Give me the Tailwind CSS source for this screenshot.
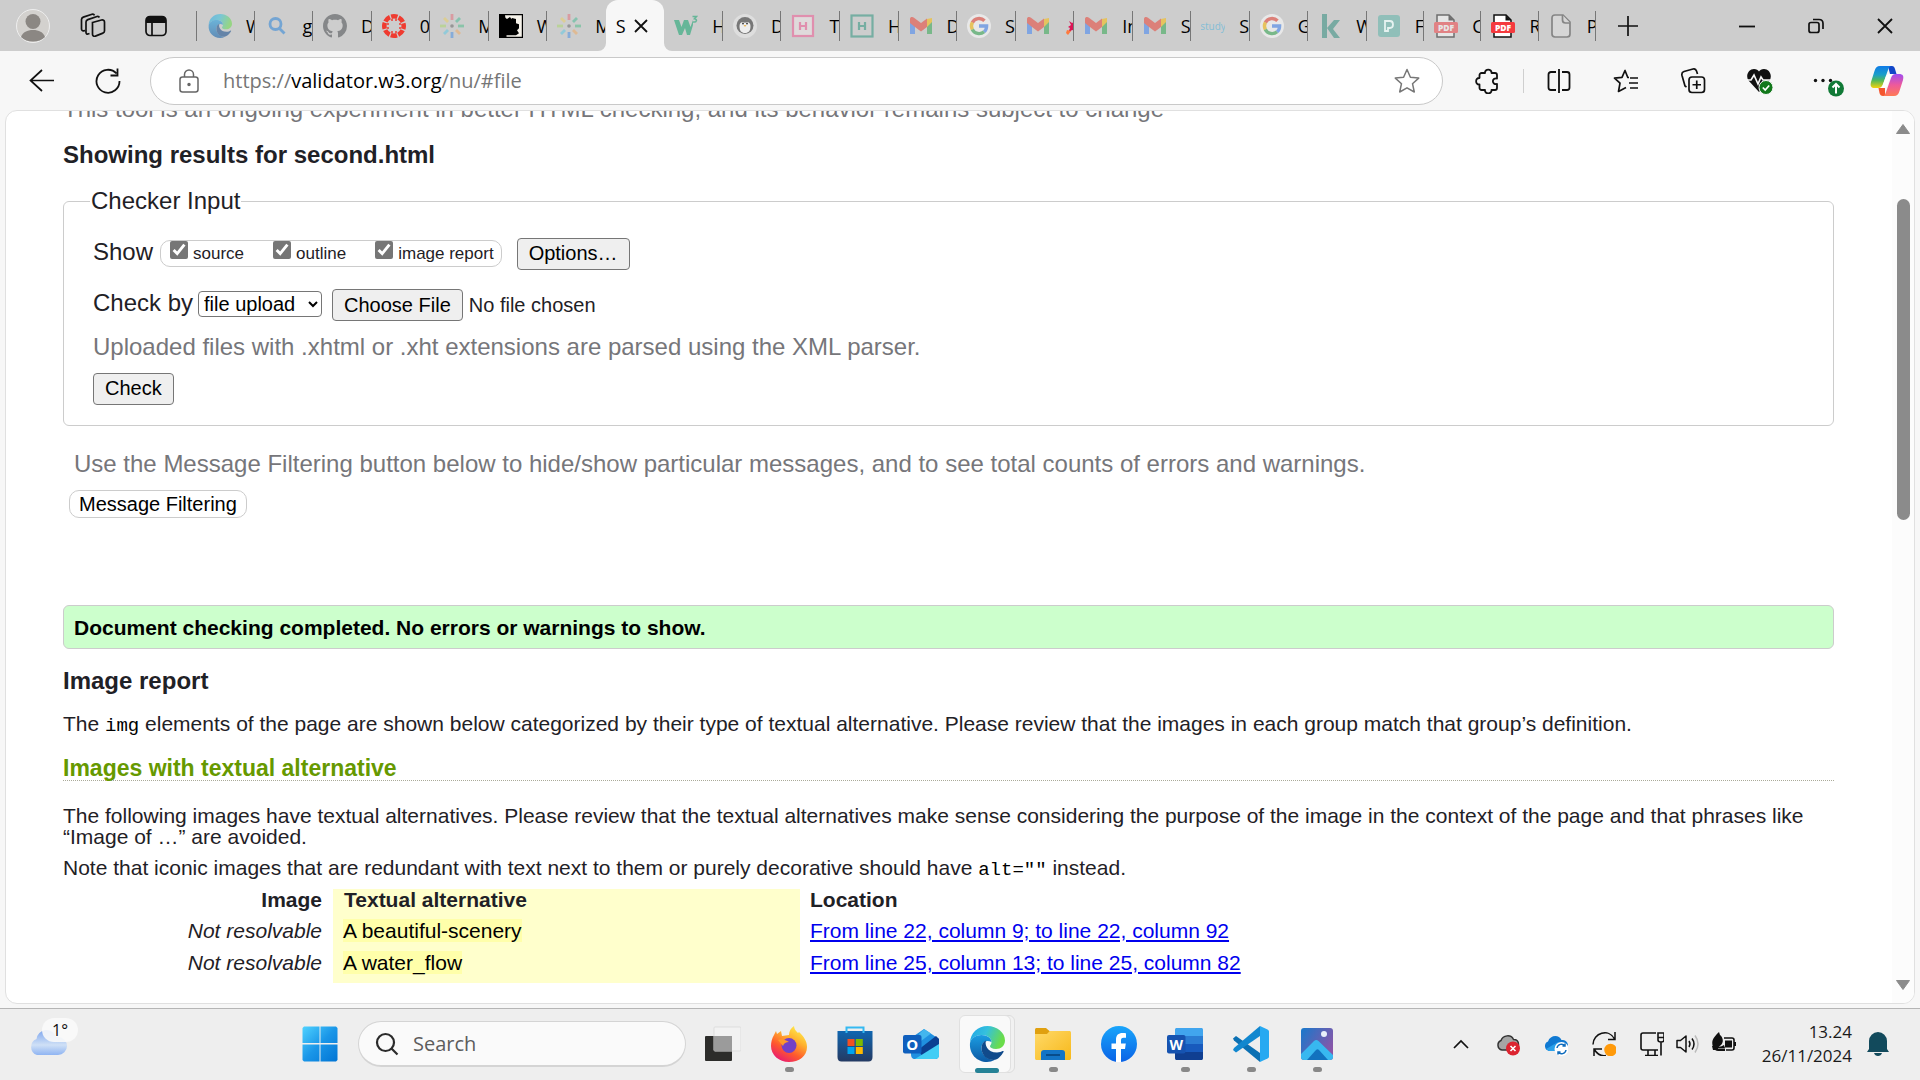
<!DOCTYPE html>
<html lang="en">
<head>
<meta charset="utf-8">
<title>Showing results for second.html</title>
<script src="https://cdn.jsdelivr.net/npm/@tailwindcss/browser@4"></script>
</head>
<body class="flex h-screen flex-col overflow-hidden bg-[#f7f7f7] font-['Open_Sans','Noto_Sans',sans-serif] text-black">

<svg width="0" height="0" class="absolute">
  <defs>
    <linearGradient id="edgeA" x1="0" y1="0" x2="1" y2="0.3"><stop offset="0" stop-color="#1fa4e8"/><stop offset=".5" stop-color="#35c1dd"/><stop offset="1" stop-color="#6adc4a"/></linearGradient>
    <linearGradient id="edgeB" x1="0" y1="0" x2="0" y2="1"><stop offset="0" stop-color="#1b9de2"/><stop offset="1" stop-color="#0c59a4"/></linearGradient>
    <symbol id="edge" viewBox="0 0 36 36">
      <path d="M1 17C1 7 9 0 18.500 0 28 0 36 6.500 36 14.500c0 5-4 8.500-9 8.500-4 0-6-1.600-6-2.800 0-.9 1.500-1.500 1.500-4.200 0-4-4.500-7-9.500-7C7 9 2 12.500 1 17z" fill="url(#edgeA)"/>
      <path d="M1 17c1-5 6-8 11.500-8 5.500 0 10 3 10 7-6-3-10 1-10 6 0 7 6 12 13 12-2.300 1.300-4.800 2-7.500 2C8 36 0 28 1 17z" fill="url(#edgeB)"/>
      <path d="M12.500 22c0-4 2-6.500 4.500-7.500-1.500 4 1 12 11 12 2.500 0 4.500-1 5.500-1.500.8-.4 1.500.3 1 1C32.500 29.500 29 34 24.500 34c-7 0-12-5-12-12z" fill="#114a8b"/>
    </symbol>
    <symbol id="gmail" viewBox="0 0 24 24">
      <path d="M1 6v14h5V9z" fill="#4285f4"/><path d="M18 9v11h5V6z" fill="#34a853"/>
      <path d="M18 5l5-1v4l-5 5z" fill="#fbbc04"/><path d="M1 5c0-2 2.500-2.500 4-1.200L12 9l6-4.500V13l-6 4.500L6 13l-5-4z" fill="#ea4335"/>
    </symbol>
    <symbol id="google" viewBox="0 0 24 24">
      <circle cx="12" cy="12" r="12" fill="#fff"/>
      <g fill="none" stroke-width="3.400"><path d="M17.500 6.800A7.600 7.600 0 0 0 5.300 8.600" stroke="#ea4335"/><path d="M5.400 8.400a7.600 7.600 0 0 0 0 7.200" stroke="#fbbc05"/><path d="M5.300 15.400a7.600 7.600 0 0 0 11.800 2.300" stroke="#34a853"/><path d="M12 12h7.600c0 2.500-.9 4.500-2.500 5.800" stroke="#4285f4"/></g>
    </symbol>
    <symbol id="spark" viewBox="0 0 24 24">
      <g stroke-width="2.800"><path d="M12 0v6" stroke="#e8606c"/><path d="M20 4l-4 4" stroke="#31b98c"/><path d="M24 12h-6" stroke="#3aba7f"/><path d="M20 20l-4-4" stroke="#f5a54e"/><path d="M12 24v-6" stroke="#3185e8"/><path d="M4 20l4-4" stroke="#4bc7e8"/><path d="M0 12h6" stroke="#a4d95c"/><path d="M4 4l4 4" stroke="#f0d050"/></g><circle cx="12" cy="12" r="1.800" fill="#555"/>
    </symbol>
    <symbol id="pdf" viewBox="0 0 24 24">
      <path d="M3 1h12l5 5v17H3z" fill="#fff" stroke="#111" stroke-width="1.500"/><path d="M14.500 1v5.500H20z" fill="#111"/>
      <rect x="0" y="8" width="24" height="11" rx="1.500" fill="#f53a3e"/>
      <text x="12" y="16.500" text-anchor="middle" font-family="Open Sans" font-size="8.500" font-weight="800" fill="#fff">PDF</text>
    </symbol>
    <linearGradient id="win" x1="0" y1="0" x2="1" y2="1"><stop offset="0" stop-color="#4fd2ff"/><stop offset=".5" stop-color="#1a96e8"/><stop offset="1" stop-color="#0074d4"/></linearGradient>
    <linearGradient id="fbg" x1="0" y1="0" x2="0" y2="1"><stop offset="0" stop-color="#19a5fb"/><stop offset="1" stop-color="#0a63e6"/></linearGradient>
    <linearGradient id="ff" x1=".8" y1="0" x2=".2" y2="1"><stop offset="0" stop-color="#fff44f"/><stop offset=".35" stop-color="#ffb02e"/><stop offset=".65" stop-color="#ff5a2c"/><stop offset="1" stop-color="#e6127a"/></linearGradient>
    <linearGradient id="store" x1="0" y1="0" x2="0" y2="1"><stop offset="0" stop-color="#1066b0"/><stop offset="1" stop-color="#243a63"/></linearGradient>
    <linearGradient id="folder" x1="0" y1="0" x2="1" y2="1"><stop offset="0" stop-color="#ffd968"/><stop offset="1" stop-color="#f7b81a"/></linearGradient>
    <linearGradient id="photo" x1="0" y1="0" x2="1" y2=".6"><stop offset="0" stop-color="#1779cc"/><stop offset="1" stop-color="#8a55a8"/></linearGradient>
    <linearGradient id="cloud" x1="0" y1="0" x2="0" y2="1"><stop offset="0" stop-color="#7ea6ee"/><stop offset=".6" stop-color="#cfe0f6"/><stop offset="1" stop-color="#8fb4f2"/></linearGradient>
    <linearGradient id="cpA" x1="0" y1="0" x2="0" y2="1"><stop offset="0" stop-color="#0f7be8"/><stop offset=".4" stop-color="#1b9fc8"/><stop offset=".65" stop-color="#4fb85b"/><stop offset="1" stop-color="#f5d20c"/></linearGradient>
    <linearGradient id="cpB" x1="0" y1="0" x2="0" y2="1"><stop offset="0" stop-color="#a04cf0"/><stop offset=".5" stop-color="#ee5a9b"/><stop offset="1" stop-color="#ff7a55"/></linearGradient>
  </defs>
</svg>

<!-- Tab strip -->
<header class="flex h-[51px] shrink-0 bg-[#cdcdcd] text-lg leading-6">
  <div class="flex w-[196px] shrink-0 items-center pl-4">
    <button aria-label="Profile" class="size-[34px]"><svg viewBox="0 0 34 34"><circle cx="17" cy="17" r="16.500" fill="#d3d1ce" stroke="#eee"/><circle cx="17" cy="12.500" r="7.500" fill="#8b8783"/><path d="M5 28c2-5 6-7 12-7s10 2 12 7c-6 6-18 6-24 0z" fill="#8b8783"/></svg></button>
    <button aria-label="Workspaces" class="ml-[30px] size-[26px]"><svg viewBox="0 0 26 26" fill="none" stroke="#111" stroke-width="1.700"><path d="M12.500 9.500l9-2.500c1.500-.4 3 .5 3 2v9c0 1-.6 1.800-1.600 2.100l-7.500 3c-1.500.5-2.900-.3-2.900-1.900z"/><path d="M9.500 20.500l-1.500.5c-1.200.3-2-.5-2-1.500V9c0-1.200.8-2 1.800-2.400L17 3.500c1-.3 2 .2 2.400 1M5 17.500l-1.500.3C2.500 18 1.500 17 1.500 16V6.500c0-1.200.8-2 1.800-2.400L12 1.300c1-.3 2 0 2.500 1"/></svg></button>
    <button aria-label="Vertical tabs" class="ml-[38px] size-6"><svg viewBox="0 0 24 24"><rect x="2" y="2.500" width="20" height="19" rx="4" fill="none" stroke="#111" stroke-width="1.700"/><path d="M2 9V6c0-2 1.500-4 4-4h12c2.500 0 4 2 4 4v3z" fill="#111"/><path d="M8 9v12" stroke="#111" stroke-width="1.700"/></svg></button>
  </div>
  <nav class="flex min-w-0 flex-1" aria-label="Tabs">
    <div class="grid min-w-0 flex-[1170] grid-cols-20 items-center">
      <a href="#" class="flex h-[30px] min-w-0 items-center gap-[14px] overflow-hidden border-x border-[#777] pl-[11px]"><svg class="size-6 shrink-0 opacity-55"><use href="#edge"/></svg>W3C</a>
      <a href="#" class="flex h-[30px] min-w-0 items-center gap-[14px] overflow-hidden border-r border-[#777] pl-[10px]"><svg class="size-6 shrink-0 opacity-60" viewBox="0 0 24 24" fill="none" stroke="#3a8bd8" stroke-width="2.800"><circle cx="10.500" cy="10" r="5.500"/><path d="M14.500 14.500l5 5"/></svg>git</a>
      <a href="#" class="flex h-[30px] min-w-0 items-center gap-[14px] overflow-hidden border-r border-[#777] pl-[10px]"><svg class="size-6 shrink-0" viewBox="0 0 16 16" fill="#858789"><path d="M8 0C3.580 0 0 3.580 0 8c0 3.540 2.290 6.530 5.470 7.590.4.070.550-.170.550-.380 0-.190-.010-.820-.010-1.490-2.010.370-2.530-.490-2.690-.940-.090-.230-.480-.940-.820-1.130-.280-.150-.680-.520-.010-.530.630-.010 1.080.580 1.230.820.720 1.210 1.870.870 2.330.660.070-.520.280-.870.510-1.070-1.780-.200-3.640-.890-3.640-3.950 0-.870.310-1.590.820-2.150-.080-.200-.360-1.020.080-2.120 0 0 .670-.210 2.200.820.640-.180 1.320-.270 2-.270s1.360.090 2 .270c1.530-1.040 2.200-.820 2.200-.820.440 1.100.160 1.920.080 2.120.510.560.820 1.270.820 2.150 0 3.070-1.870 3.750-3.650 3.950.290.250.540.730.540 1.480 0 1.070-.010 1.930-.010 2.200 0 .210.150.460.550.380A8.010 8.010 0 0 0 16 8c0-4.420-3.580-8-8-8z"/></svg>Dev</a>
      <a href="#" class="flex h-[30px] min-w-0 items-center gap-[14px] overflow-hidden border-r border-[#777] pl-[10px]"><svg class="size-6 shrink-0" viewBox="0 0 24 24"><circle cx="12" cy="12" r="9.700" fill="none" stroke="#ef3b30" stroke-width="4.600" stroke-dasharray="6.320 1.300" stroke-dashoffset="3.160"/><g fill="#ef3b30"><circle cx="10" cy="6" r="1"/><circle cx="14" cy="6" r="1"/><circle cx="10" cy="18" r="1"/><circle cx="14" cy="18" r="1"/><circle cx="6" cy="10" r="1"/><circle cx="6" cy="14" r="1"/><circle cx="18" cy="10" r="1"/><circle cx="18" cy="14" r="1"/></g></svg>01</a>
      <a href="#" class="flex h-[30px] min-w-0 items-center gap-[14px] overflow-hidden border-r border-[#777] pl-[10px]"><svg class="size-6 shrink-0 opacity-45"><use href="#spark"/></svg>My</a>
      <a href="#" class="flex h-[30px] min-w-0 items-center gap-[14px] overflow-hidden border-r border-[#777] pl-[10px]"><svg class="size-6 shrink-0" viewBox="0 0 24 24"><rect width="24" height="24"/><path d="M6 1.200h16.800v21.600H7.500v-1.500H17l3-2-2-3 2-2v-4l-3-1V5l-4-1-2 3-3-1-1 2z" fill="#f5f2ea"/><path d="M5 3l3 2 3-2 2 3-2 3 1 4-4 3-4-2z"/></svg>We</a>
      <a href="#" class="flex h-[30px] min-w-0 items-center gap-[14px] overflow-hidden border-r border-transparent pl-[10px]"><svg class="size-6 shrink-0 opacity-45"><use href="#spark"/></svg>My</a>
      <a href="#" aria-current="page" class="relative flex h-[51px] min-w-0 items-center justify-between rounded-t-[12px] bg-[#f7f7f7] pr-4 pl-[10px]">
        <span>S</span><svg class="size-[14px] shrink-0" viewBox="0 0 14 14" stroke="#111" stroke-width="1.800"><path d="M1 1l12 12M13 1L1 13"/></svg>
        <svg class="absolute bottom-0 -left-2 size-2" viewBox="0 0 8 8"><path d="M8 0v8H0a8 8 0 0 0 8-8z" fill="#f7f7f7"/></svg>
        <svg class="absolute -right-2 bottom-0 size-2" viewBox="0 0 8 8"><path d="M0 0v8h8a8 8 0 0 1-8-8z" fill="#f7f7f7"/></svg>
      </a>
      <a href="#" class="flex h-[30px] min-w-0 items-center gap-[14px] overflow-hidden border-r border-[#777] pl-[10px]"><svg class="size-6 shrink-0 opacity-60" viewBox="0 0 24 24" fill="#22a775"><path d="M0 6h5l2.500 7L10 6h4l2.500 7L19 6v5l-3 10h-3l-2-7-3 7H5z"/><path d="M18.500 2.500h4l-2 2.200c3 .3 2.500 4-1.500 3.300" fill="none" stroke="#22a775" stroke-width="1.500"/></svg>HT</a>
      <a href="#" class="flex h-[30px] min-w-0 items-center gap-[14px] overflow-hidden border-r border-[#777] pl-[10px]"><svg class="size-6 shrink-0" viewBox="0 0 24 24"><circle cx="12" cy="12" r="12" fill="#dedede"/><circle cx="12" cy="11.500" r="8.500" fill="#777"/><path d="M6.500 12c0-4 4-5 5.500-3 1.500-2 5.500-1 5.500 3 0 5-2 7-5.500 7s-5.500-2-5.500-7z" fill="#eee"/><circle cx="10" cy="9.500" r="1" fill="#444"/><circle cx="14" cy="9.500" r="1" fill="#444"/><path d="M10.500 11h3L12 13z" fill="#e9b75c"/></svg>Do</a>
      <a href="#" class="flex h-[30px] min-w-0 items-center gap-[14px] overflow-hidden border-r border-[#777] pl-[10px]"><svg class="size-6 shrink-0" viewBox="0 0 24 24" fill="none" stroke="#e08fae" stroke-width="2.200"><rect x="2" y="2" width="20" height="20" fill="#dfdadb"/><path d="M9 8v8M15 8v8M9 12h6"/></svg>Te</a>
      <a href="#" class="flex h-[30px] min-w-0 items-center gap-[14px] overflow-hidden border-r border-[#777] pl-[10px]"><svg class="size-6 shrink-0" viewBox="0 0 24 24" fill="none" stroke="#76aea2" stroke-width="2.200"><rect x="1.500" y="1.500" width="21" height="21"/><path d="M9 8v8M15 8v8M9 12h6"/></svg>HT</a>
      <a href="#" class="flex h-[30px] min-w-0 items-center gap-[14px] overflow-hidden border-r border-[#777] pl-[10px]"><svg class="size-6 shrink-0 opacity-55"><use href="#gmail"/></svg>De</a>
      <a href="#" class="flex h-[30px] min-w-0 items-center gap-[14px] overflow-hidden border-r border-[#777] pl-[10px]"><svg class="size-6 shrink-0 opacity-55"><use href="#google"/></svg>Se</a>
      <a href="#" class="flex h-[30px] min-w-0 items-center gap-[14px] overflow-hidden border-r border-[#777] pl-[10px]"><svg class="size-6 shrink-0 opacity-55"><use href="#gmail"/></svg><svg class="h-5 w-5 shrink-0" viewBox="0 0 20 20"><path d="M5 5l3 2 6-3v12l-6-2-4 3 2-5-2-1 3-2z" fill="#dc1556"/><path d="M3 14l4 1-3 4-2-2z" fill="#ff7a3d"/></svg></a>
      <a href="#" class="flex h-[30px] min-w-0 items-center gap-[14px] overflow-hidden border-r border-[#777] pl-[10px]"><svg class="size-6 shrink-0 opacity-55"><use href="#gmail"/></svg>Inb</a>
      <a href="#" class="flex h-[30px] min-w-0 items-center gap-[14px] overflow-hidden border-r border-[#777] pl-[10px]"><svg class="size-6 shrink-0 opacity-55"><use href="#gmail"/></svg>Sub</a>
      <a href="#" class="flex h-[30px] min-w-0 items-center gap-[14px] overflow-hidden border-r border-[#777] pl-[10px]"><svg class="size-6 shrink-0" viewBox="0 0 24 24"><text x="12" y="16" text-anchor="middle" font-family="Open Sans" font-size="10" fill="#84bdd6">study</text></svg>St</a>
      <a href="#" class="flex h-[30px] min-w-0 items-center gap-[14px] overflow-hidden border-r border-[#777] pl-[10px]"><svg class="size-6 shrink-0 opacity-55"><use href="#google"/></svg>Go</a>
      <a href="#" class="flex h-[30px] min-w-0 items-center gap-[14px] overflow-hidden border-r border-[#777] pl-[10px]"><svg class="size-6 shrink-0" viewBox="0 0 24 24" fill="#78aaa2"><path d="M4 0h5v24H4zM9 14l7-8h6l-7 9 7 9h-6z"/></svg>Wh</a>
    </div>
    <div class="grid min-w-0 flex-[229] grid-cols-4 items-center">
      <a href="#" class="flex h-[30px] min-w-0 items-center gap-[14px] overflow-hidden border-r border-[#777] pl-[10px]"><svg class="size-6 shrink-0" viewBox="0 0 24 24"><rect x="1" y="1" width="22" height="22" rx="3" fill="#90bfb9"/><path d="M8 7h5c4 0 4 7 0 7h-2v3H8z" fill="none" stroke="#e5f2f0" stroke-width="1.800"/></svg>Fr</a>
      <a href="#" class="flex h-[30px] min-w-0 items-center gap-[14px] overflow-hidden border-r border-[#777] pl-[10px]"><svg class="size-6 shrink-0 opacity-50"><use href="#pdf"/></svg>Ch</a>
      <a href="#" class="flex h-[30px] min-w-0 items-center gap-[14px] overflow-hidden border-r border-[#777] pl-[10px]"><svg class="size-6 shrink-0"><use href="#pdf"/></svg>Re</a>
      <a href="#" class="flex h-[30px] min-w-0 items-center gap-[14px] overflow-hidden border-r border-[#777] pl-[10px]"><svg class="size-6 shrink-0" viewBox="0 0 24 24" fill="#d6d6d6" stroke="#858585" stroke-width="1.700"><path d="M6 1h8l7 7v12c0 2-1 3-3 3H6c-2 0-3-1-3-3V4c0-2 1-3 3-3z"/><path d="M13.500 1v5c0 2 1 3 3 3H21"/></svg>Pr</a>
    </div>
  </nav>
  <div class="flex w-[324px] shrink-0 items-center justify-between pr-[27px] pl-[21px]">
    <button aria-label="New tab" class="size-[22px]"><svg viewBox="0 0 22 22" stroke="#111" stroke-width="1.700"><path d="M11 1v20M1 11h20"/></svg></button>
    <div class="flex gap-[53px]">
      <button aria-label="Minimize" class="size-4"><svg viewBox="0 0 16 16" stroke="#111" stroke-width="1.800"><path d="M0 8.500h16"/></svg></button>
      <button aria-label="Restore" class="size-4"><svg viewBox="0 0 16 16" fill="none" stroke="#111" stroke-width="1.700"><rect x="1" y="4.500" width="10" height="10" rx="2"/><path d="M5 1.500h6c2.500 0 4 1.500 4 4V11"/></svg></button>
      <button aria-label="Close" class="size-4"><svg viewBox="0 0 16 16" stroke="#111" stroke-width="1.800"><path d="M1 1l14 14M15 1L1 15"/></svg></button>
    </div>
  </div>
</header>

<!-- Address bar -->
<div class="flex h-[59px] shrink-0 items-center pt-px">
  <div class="flex w-[150px] shrink-0 items-center gap-10 pl-[29px]">
    <button aria-label="Back" class="size-[26px]"><svg viewBox="0 0 26 26" fill="none" stroke="#111" stroke-width="1.700"><path d="M25 12.500H1.500M13 2L1.500 12.500 13 23"/></svg></button>
    <button aria-label="Refresh" class="size-[26px]"><svg viewBox="0 0 26 26" fill="none" stroke="#111" stroke-width="1.800"><path d="M24.500 13A11.500 11.500 0 1 1 21.500 5.500M22.500 0.500v7h-7"/></svg></button>
  </div>
  <div class="flex h-12 min-w-0 flex-1 items-center rounded-full border border-[#c9c9c9] bg-white pr-[22px] pl-[26px]">
    <svg class="size-6 shrink-0" viewBox="0 0 24 24" fill="none" stroke="#666" stroke-width="1.500"><rect x="3" y="8" width="18" height="15" rx="2.500"/><path d="M7.500 8V5.500a4.500 4.500 0 0 1 9 0V8"/><circle cx="12" cy="15.500" r="1" fill="#666"/></svg>
    <a href="https://validator.w3.org/nu/#file" class="ml-[22px] flex-1 text-xl leading-7 text-[#767676]">https://<span class="text-black">validator.w3.org</span>/nu/#file</a>
    <button aria-label="Add to favorites" class="size-[26px]"><svg viewBox="0 0 26 26" fill="none" stroke="#777" stroke-width="1.500" stroke-linejoin="round"><path d="M13 1.500l3.400 7.700 8.300.9-6.200 5.600 1.800 8.300L13 19.800 5.700 24l1.800-8.300L1.300 10.100l8.300-.9z"/></svg></button>
  </div>
  <div class="flex w-[477px] shrink-0 items-center pl-[32px]">
    <button aria-label="Extensions" class="size-[26px]"><svg viewBox="0 0 26 26" fill="none" stroke="#111" stroke-width="1.800" stroke-linejoin="round"><path d="M6.500 5H10c-.5-4.500 7-4.500 6.500 0H20c1 0 2 1 2 2v3.500c-5.500-1-5.500 6.500 0 5.500V20c0 1-1 2-2 2h-3.500c.5 4.500-7 4.500-6.500 0H6.500c-1 0-2-1-2-2v-3.500c-4.500.5-4.500-7 0-6.500V7c0-1 1-2 2-2z"/></svg></button>
    <span class="ml-[22px] h-6 w-px bg-[#cfcfcf]"></span>
    <button aria-label="Split screen" class="ml-[22px] size-[26px]"><svg viewBox="0 0 26 26" fill="none" stroke="#111" stroke-width="1.800"><path d="M10 4H5C3.500 4 2.500 5 2.500 6.500v13C2.500 21 3.500 22 5 22h5M16 4h5c1.500 0 2.500 1 2.500 2.500v13c0 1.500-1 2.500-2.500 2.500h-5M13 1v24"/></svg></button>
    <button aria-label="Favorites" class="ml-[41px] size-[26px]"><svg viewBox="0 0 26 26" fill="none" stroke="#111" stroke-width="1.700" stroke-linejoin="round"><path d="M16 9.500h-1.200L12 2.500 9 9.300l-7.500.9 5.500 5-1.500 8.300 7.500-4M17 10h8M16 15h9M17 20h8"/></svg></button>
    <button aria-label="Collections" class="ml-[41px] size-[26px]"><svg viewBox="0 0 26 26" fill="none" stroke="#111" stroke-width="1.700"><rect x="9" y="9" width="15.500" height="15.500" rx="3"/><path d="M16.750 12.500v8.500M12.500 16.750H21M6.500 19L5 18 2 7.500C1.500 5.500 2.500 4 4 3.500l9-2.500c1.500-.4 3 .5 3.500 2l1 3"/></svg></button>
    <button aria-label="Browser essentials" class="ml-[40px] size-7"><svg viewBox="0 0 28 28"><path d="M13 25L2.500 13.500C-1 8 3 2 8 2c2.500 0 4 1 5 2.500C14 3 15.500 2 18 2c5 0 9 6 5.500 11.500z" fill="#111"/><path d="M0 13h5l3-5 4 9 3-7 2 3h7" fill="none" stroke="#f7f7f7" stroke-width="1.700"/><circle cx="20" cy="20.500" r="7" fill="#12781b" stroke="#f7f7f7"/><path d="M16.800 20.500l2.400 2.500 4-4.500" fill="none" stroke="#fff" stroke-width="1.700"/></svg></button>
    <button aria-label="Settings and more" class="ml-[38px] size-8"><svg viewBox="0 0 32 32"><g fill="#111"><circle cx="3.500" cy="15.500" r="1.700"/><circle cx="11" cy="15.500" r="1.700"/><circle cx="18.500" cy="15.500" r="1.700"/></g><circle cx="24" cy="23.500" r="8" fill="#117a37"/><path d="M24 28.500v-9M20.500 22.500l3.500-3.500 3.500 3.500" fill="none" stroke="#fff" stroke-width="2"/></svg></button>
    <button aria-label="Copilot" class="ml-[26px] size-[34px]"><svg viewBox="0 0 34 34"><path d="M18 2h4c1.500 0 2.500 1 3 3l1.500 5H20z" fill="#1146c8"/><path d="M15 32h-2c-2 0-3-1-3.500-3L8.500 24H15z" fill="#f4562f"/><path d="M10 2h11c-1.500.5-2.300 2-3 4l-5 14c-1 2.800-2.300 4-4.500 4H5c-4 0-5-2-4-6L4.500 7C5.500 3.500 7 2 10 2z" fill="url(#cpA)"/><path d="M24 32H13c1.500-.5 2.300-2 3-4l5-14c1-2.800 2.300-4 4.500-4H29c4 0 5 2 4 6l-3.500 11c-1 3.500-2.500 5-5.500 5z" fill="url(#cpB)"/><path d="M12.500 22l3-8.500c.8-2.300 2-3.500 4.500-3.500h3c-2 1-3 3-3.500 5l-1.500 5c-.8 2.600-2 4-4.500 4h-3c1-.3 1.600-1 2-2z" fill="#fff"/></svg></button>
  </div>
</div>

<!-- Web page -->
<div class="mx-[5px] mb-[4px] flex min-h-0 flex-1 overflow-hidden rounded-xl border border-[#e0e0e0] bg-white font-['Liberation_Sans',Arial,sans-serif] text-[#1f2126]">
  <main class="min-w-0 flex-1 overflow-hidden pr-[58px] pl-[57px] text-[21px] leading-[21px]">
    <p class="-mt-4 text-2xl leading-7 text-[#76767a]">This tool is an ongoing experiment in better HTML checking, and its behavior remains subject to change</p>
    <h2 class="mt-[18px] text-2xl leading-7 font-bold">Showing results for second.html</h2>

    <form class="mt-[18px]">
      <fieldset class="rounded-md border border-[#ccc] pr-[29px] pb-5 pl-[29px]">
        <legend class="-ml-[3px] px-px text-2xl leading-7">Checker Input</legend>
        <div class="mt-[23px] flex h-8 items-start text-2xl leading-7">
          <span>Show</span>
          <div class="mt-[2px] ml-[7px] flex h-[27px] items-start rounded-[10px] border border-[#ccc] pr-[7px] pl-[9px] text-[17px] leading-5">
            <input id="source" type="checkbox" checked class="size-[18px] accent-[#767676]"><label for="source" class="mt-[3px] ml-[5px]">source</label>
            <input id="outline" type="checkbox" checked class="ml-[29px] size-[18px] accent-[#767676]"><label for="outline" class="mt-[3px] ml-[5px]">outline</label>
            <input id="report" type="checkbox" checked class="ml-[29px] size-[18px] accent-[#767676]"><label for="report" class="mt-[3px] ml-[5px]">image report</label>
          </div>
          <button type="button" class="ml-[15px] h-8 rounded-[4px] border border-[#767676] bg-[#efefef] px-[11px] pb-[2px] text-xl leading-6 text-black">Options…</button>
        </div>
        <div class="mt-[19px] flex h-8 items-start text-xl leading-6">
          <label for="docselect" class="text-2xl leading-7">Check by</label>
          <select id="docselect" class="mt-[2px] ml-[5px] h-[26px] w-[124px] rounded-[4px] border border-[#767676] bg-white px-px text-xl leading-6 text-black"><option>file upload</option></select>
          <input type="file" aria-label="File to check" class="ml-[10px] h-8 w-[300px] file:mr-[6px] file:h-8 file:rounded-[4px] file:border file:border-solid file:border-[#767676] file:bg-[#efefef] file:px-[11px] file:text-black">
        </div>
        <p class="mt-3 text-2xl leading-7 text-[#76767a]">Uploaded files with .xhtml or .xht extensions are parsed using the XML parser.</p>
        <button type="button" class="mt-3 block h-8 rounded-[4px] border border-[#767676] bg-[#efefef] px-[11px] pb-[2px] text-xl leading-6 text-black">Check</button>
      </fieldset>
    </form>

    <p class="mt-6 pl-[11px] text-2xl leading-7 text-[#76767a]">Use the Message Filtering button below to hide/show particular messages, and to see total counts of errors and warnings.</p>
    <button class="mt-3 ml-[6px] block h-7 rounded-[10px] border border-[#ccc] px-[9px] text-xl leading-6 text-black">Message Filtering</button>

    <p class="mt-[87px] flex h-11 items-center rounded-md border border-[#ccc] bg-[#cfc] pl-[10px] font-bold text-black">Document checking completed. No errors or warnings to show.</p>

    <h2 class="mt-[18px] text-2xl leading-7 font-bold">Image report</h2>
    <p class="mt-[18px]">The <code class="font-['Liberation_Mono',monospace] text-[19px] leading-4 text-black">img</code> elements of the page are shown below categorized by their type of textual alternative. Please review that the images in each group match that group’s definition.</p>
    <h3 class="mt-5 h-[27px] border-b border-dotted border-[#aa9] text-[23px] leading-7 font-bold text-[#690]">Images with textual alternative</h3>
    <p class="mt-6">The following images have textual alternatives. Please review that the textual alternatives make sense considering the purpose of the image in the context of the page and that phrases like “Image of …” are avoided.</p>
    <p class="mt-[10px]">Note that iconic images that are redundant with text next to them or purely decorative should have <code class="font-['Liberation_Mono',monospace] text-[19px] leading-4 text-black">alt=""</code> instead.</p>

    <table class="mt-[11px] text-left">
      <thead>
        <tr class="h-[30px] align-top">
          <th class="w-[270px] pr-[11px] text-right">Image</th><th class="w-[467px] bg-[#ffc] pl-[11px]">Textual alternative</th><th class="pl-[10px]">Location</th>
        </tr>
      </thead>
      <tbody class="leading-[23px]">
        <tr class="h-8 align-top"><td class="pr-[11px] text-right italic">Not resolvable</td><td class="bg-[#ffc] pl-[10px] text-black"><span class="bg-[#ffa]">A beautiful-scenery</span></td><td class="pl-[10px]"><a href="#l22c92" class="text-[#00e] underline">From line 22, column 9; to line 22, column 92</a></td></tr>
        <tr class="h-8 align-top"><td class="pr-[11px] text-right italic">Not resolvable</td><td class="bg-[#ffc] pl-[10px] text-black"><span class="bg-[#ffa]">A water_flow</span></td><td class="pl-[10px]"><a href="#l25c82" class="text-[#00e] underline">From line 25, column 13; to line 25, column 82</a></td></tr>
      </tbody>
    </table>
  </main>
  <div class="flex w-[22px] shrink-0 flex-col items-center bg-[#fcfcfc] py-3">
    <svg class="h-3 w-4" viewBox="0 0 16 12"><path d="M8 1.500l6.500 9h-13z" fill="#8b8b8b" stroke="#8b8b8b" stroke-linejoin="round"/></svg>
    <div class="mt-[64px] h-[321px] w-[13px] rounded-full bg-[#8b8b8b]"></div>
    <svg class="mt-auto h-3 w-4" viewBox="0 0 16 12"><path d="M8 10.500l6.500-9h-13z" fill="#8b8b8b" stroke="#8b8b8b" stroke-linejoin="round"/></svg>
  </div>
</div>

<!-- Taskbar -->
<footer class="flex h-[72px] shrink-0 items-center border-t border-[#b5b5b5] bg-[#eee] pb-px">
  <button aria-label="Weather" class="mt-[2px] ml-[28px] h-[50px] w-[52px] shrink-0 self-start"><svg viewBox="0 0 52 50"><path d="M9 44a8.500 8.500 0 0 1-.5-16A10 10 0 0 1 28 26h2a9 9 0 0 1 0 18z" fill="url(#cloud)"/><rect x="14" y="7" width="36" height="24" rx="12" fill="#f9f9f9" fill-opacity=".9"/><text x="24" y="25" font-family="Open Sans" font-size="16" fill="#111">1°</text></svg></button>
  <button aria-label="Start" class="ml-[222px] size-9 shrink-0"><svg viewBox="0 0 36 36" fill="url(#win)"><path d="M2 .5h15.500V17H.5V2zM18.500.5H34L35.500 2v15h-17zM.5 18.500h17v17H2L.5 34zM18.500 18.500h17V34L34 35.500H18.500z"/></svg></button>
  <label class="ml-5 flex h-[46px] w-[328px] shrink-0 items-center rounded-full border border-b-2 border-[#d4d4d4] bg-[#fafafa] pl-4">
    <svg class="size-6" viewBox="0 0 24 24" fill="none" stroke="#2b2b2b" stroke-width="2.200"><circle cx="10.500" cy="10.500" r="8.500"/><path d="M16.500 16.500l6 6"/></svg>
    <input type="text" aria-label="Search" placeholder="Search" class="ml-[14px] w-[220px] text-xl leading-7 placeholder:text-[#5d5d5d]">
  </label>
  <div class="ml-[4px] flex h-full shrink-0 items-center">
    <button aria-label="Task view" class="flex w-[66px] justify-center"><svg class="size-9" viewBox="0 0 36 36"><rect y="10" width="27" height="25" rx="1" fill="#2c2c2a"/><rect x="9" y="1" width="27" height="24" rx="1" fill="#f2f2f2" stroke="#ddd"/><path d="M9 10h18v15H9z" fill="#9b9b9b"/></svg></button>
    <button aria-label="Firefox" class="relative flex w-[66px] justify-center"><svg class="size-9" viewBox="0 0 36 36"><path d="M3 9l2-4 1 3 4-3 1 5 7-1c0-4 2-7 5-9 0 3 2 5 4 7l1-1c5 5 8 9 8 15 0 9-8 15-18 15S0 29 0 20c0-4 1-8 3-11z" fill="url(#ff)"/><circle cx="18" cy="19.500" r="7.500" fill="#7340c8"/><path d="M7 14c4-2 8 0 11 2-3 0-5 1-6 4z" fill="#ff9a2a"/></svg><span class="absolute -bottom-[10px] h-[5px] w-[9px] rounded-full bg-[#888]"></span></button>
    <button aria-label="Microsoft Store" class="flex w-[66px] justify-center"><svg class="size-9" viewBox="0 0 36 36"><path d="M.5 5h35v26c0 3-1.500 4.500-4 4.500h-27c-2.500 0-4-1.500-4-4.500z" fill="url(#store)"/><path d="M9.500 7V1.500h17V7" fill="none" stroke="#35b9f1" stroke-width="2"/><path d="M10.500 13h7v7h-7z" fill="#f25022"/><path d="M18.800 13h7v7h-7z" fill="#7fba00"/><path d="M10.500 21h7v7h-7z" fill="#00a4ef"/><path d="M18.800 21h7v7h-7z" fill="#ffb900"/></svg></button>
    <button aria-label="Outlook" class="flex w-[66px] justify-center"><svg class="size-9" viewBox="0 0 36 36"><path d="M8 12L21 3l15 10v15c0 3-1 5-4 5H12c-3 0-4-2-4-5z" fill="#2090e0"/><path d="M15 24l18-14 3 3v6L20 31z" fill="#0b3f91"/><path d="M12 33L36 18v11c0 2.500-1.500 4-4 4z" fill="#42cdf5"/><path d="M16 8l5-5 7 4.500L18 15z" fill="#43b6ee"/><rect y="9" width="18.500" height="18.500" rx="2" fill="#0f5fbd"/><text x="9.200" y="24" text-anchor="middle" font-family="Open Sans" font-size="15" font-weight="700" fill="#fff">O</text></svg></button>
    <button aria-label="Microsoft Edge" class="relative flex h-[58px] w-[66px] items-center justify-center"><span class="absolute inset-y-0 left-[9px] w-[52px] rounded-md border border-[#ddd] bg-[#f1f1f1]"></span><span class="absolute inset-y-0 left-[5px] w-[52px] rounded-md border border-[#e0e0e0] bg-[#f9f9f9]"></span><svg class="relative size-9"><use href="#edge"/></svg><span class="absolute bottom-0 h-[5px] w-6 rounded-full bg-[#258296]"></span></button>
    <button aria-label="File Explorer" class="relative flex w-[66px] justify-center"><svg class="size-9" viewBox="0 0 36 36"><path d="M0 4c0-1.500.5-2 2-2h9l4 3.500-4 4H0z" fill="#e0a00f"/><path d="M0 8h12l3-3h19c1.500 0 2 .5 2 2v25c0 1.500-.5 2-2 2H2c-1.500 0-2-.5-2-2z" fill="url(#folder)"/><path d="M6 34v-7c0-2 1-3 3-3h18c2 0 3 1 3 3v7z" fill="#1374c6"/><path d="M11 29h14" stroke="#084c8b" stroke-width="2"/></svg><span class="absolute -bottom-[10px] h-[5px] w-[9px] rounded-full bg-[#888]"></span></button>
    <button aria-label="Facebook" class="flex w-[66px] justify-center"><svg class="size-9" viewBox="0 0 36 36"><circle cx="18" cy="18" r="18" fill="url(#fbg)"/><path d="M15 36V23h-4.500v-5.500H15v-3.800C15 9 17.500 7 21.500 7c1.500 0 3 .2 3.500.3v4.500h-2.500c-2 0-2.500 1-2.500 2.500v3.200h4.800L24 23h-4v13c-1.500.2-3.500.2-5 0z" fill="#fff"/></svg></button>
    <button aria-label="Word" class="relative flex w-[66px] justify-center"><svg class="size-9" viewBox="0 0 36 36"><path d="M8 4c0-1.500.5-2 2-2h24c1.500 0 2 .5 2 2v6H8z" fill="#41a5ee"/><path d="M8 10h28v8H8z" fill="#2b7cd3"/><path d="M8 18h28v8H8z" fill="#185abd"/><path d="M8 26h28v6c0 1.500-.5 2-2 2H10c-1.500 0-2-.5-2-2z" fill="#103f91"/><rect y="9" width="18.500" height="18.500" rx="2" fill="#1653b0"/><text x="9.200" y="23.500" text-anchor="middle" font-family="Open Sans" font-size="14" font-weight="700" fill="#fff">W</text></svg><span class="absolute -bottom-[10px] h-[5px] w-[9px] rounded-full bg-[#888]"></span></button>
    <button aria-label="Visual Studio Code" class="relative flex w-[66px] justify-center"><svg class="size-9" viewBox="0 0 36 36"><path d="M0 12.500L3 10l24 17v9L1 14.500z" fill="#0b70b3"/><path d="M0 24l3 2.500L27 10V0L1 22z" fill="#1187cf"/><path d="M27 0l7.500 3.500c1 .5 1.500 1 1.500 2.500v24c0 1.500-.5 2-1.500 2.500L27 36z" fill="#27a9f1"/></svg><span class="absolute -bottom-[10px] h-[5px] w-[9px] rounded-full bg-[#888]"></span></button>
    <button aria-label="Photos" class="relative flex w-[66px] justify-center"><svg class="size-9" viewBox="0 0 36 36"><rect x="2" y="2" width="32" height="32" rx="3" fill="url(#photo)"/><path d="M2 28l13-13c1.500-1.500 3-1.500 4.500 0L34 29v2c0 2-1 3-3 3H5c-2 0-3-1-3-3z" fill="#38b8f0"/><path d="M8 34l9-10c1-1 2-1 3 0l9 10z" fill="#1272bf"/><circle cx="25" cy="8" r="3" fill="#e8f0fa"/></svg><span class="absolute -bottom-[10px] h-[5px] w-[9px] rounded-full bg-[#888]"></span></button>
  </div>
  <div class="ml-auto flex shrink-0 items-center pr-[30px]">
    <button aria-label="Show hidden icons" class="w-4"><svg viewBox="0 0 16 10" fill="none" stroke="#111" stroke-width="1.700"><path d="M1 9l7-7 7 7"/></svg></button>
    <button aria-label="Sync error" class="ml-[27px] size-6"><svg viewBox="0 0 24 24"><path d="M6 18a5 5 0 0 1-1-9.500C7 3 15 2 17.500 7.500c3 0 5 2 5 5S21 18 18 18z" fill="#a5a5a5" stroke="#333" stroke-width="1.500"/><circle cx="17" cy="16.500" r="7" fill="#dc2430"/><path d="M14.500 14l5 5M19.500 14l-5 5" stroke="#fff" stroke-width="1.600"/></svg></button>
    <button aria-label="OneDrive" class="ml-6 size-6"><svg viewBox="0 0 24 24"><path d="M5 19a5 5 0 0 1-1-9.500C6 3 15 2 17.500 8c4 0 6.500 2 6.500 5.500S22 19 19 19z" fill="#1079d2"/><path d="M2 17l12-7 8 7-3 2H5z" fill="#29a0ea"/><circle cx="17.500" cy="17" r="7" fill="#fff"/><path d="M13 16a4.500 4.500 0 0 1 8-2M22 18a4.500 4.500 0 0 1-8 2M21 11.500V14h-2.500M14 22.500V20h2.500" fill="none" stroke="#0f6cbd" stroke-width="1.500"/></svg></button>
    <button aria-label="Updates" class="ml-6 size-6"><svg viewBox="0 0 24 24" fill="none" stroke="#111" stroke-width="1.500"><path d="M1 12.500C1 1 17-4 22.500 7M23 0v7.500h-7M14 23.500c-5 1-9-1.500-12-6.500M2 24v-7h8"/><circle cx="18.500" cy="18" r="5.500" fill="#ff9a0b" stroke="#ff9a0b"/></svg></button>
    <button aria-label="Network" class="ml-6 size-6"><svg viewBox="0 0 24 24" fill="none" stroke="#111" stroke-width="1.600"><path d="M16 1H3Q1 1 1 3v13q0 2 2 2h15M8 18v5M15 18v5M5 23.500h13M21 10v13.500M18 1h6v7q0 2-3 2t-3-2zM18 5.500h6"/></svg></button>
    <button aria-label="Volume" class="ml-3 size-6"><svg viewBox="0 0 24 24" fill="none" stroke="#111" stroke-width="1.500"><path d="M1 8.500h3.500L10 4v16l-5.500-4.500H1z" stroke-linejoin="round"/><path d="M13 9q2 3 0 6M16 6.500q4 5.500 0 11"/><path d="M19 3.500q6 8.500 0 17" stroke="#bbb"/></svg></button>
    <button aria-label="Battery" class="ml-3 size-6"><svg viewBox="0 0 24 24"><path d="M12 6h8c1.500 0 2 .5 2 2v8c0 1.500-.5 2-2 2h-6" fill="none" stroke="#111" stroke-width="1.600"/><path d="M13 8.500h7v7h-7zM22 10h2v4h-2z" fill="#111"/><path d="M1 15C-1 9 1 6 7 0l1 3c3 2 4 7 1 10-2 2-4 3-6 1zM0 14h4q4 2 8-1l1 3H6v2H1zM3 16.500h10V19H6q-3 0-3-2.500z" fill="#111"/></svg></button>
    <time class="ml-[18px] w-[98px] text-right text-[17px] leading-6 text-[#1a1a1a]">13.24<br>26/11/2024</time>
    <button aria-label="Notifications" class="ml-[14px] size-6"><svg viewBox="0 0 24 24" fill="#124a5c"><path d="M3 17V9a9 9 0 0 1 18 0v8l2 3H1zM8 21h8q-1 3-4 3t-4-3z"/></svg></button>
  </div>
</footer>
</body>
</html>
